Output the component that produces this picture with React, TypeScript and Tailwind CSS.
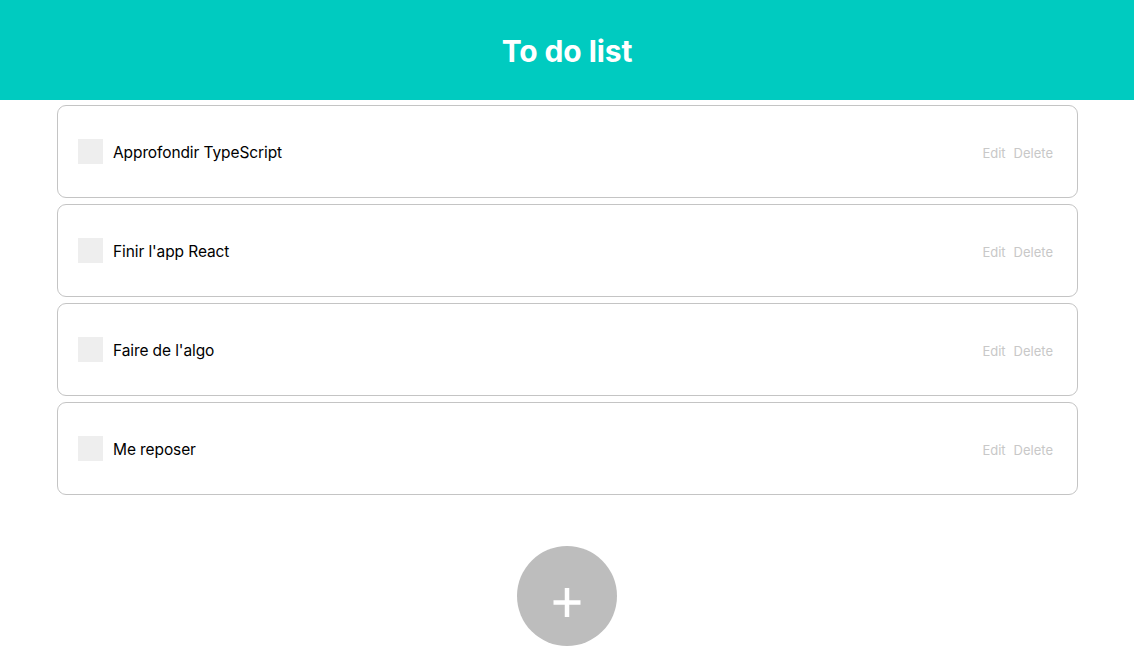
import React from "react";

const todos = ["Approfondir TypeScript", "Finir l'app React", "Faire de l'algo", "Me reposer"];

export default function App() {
  return (
    <div className="min-h-[671px] bg-white" style={{ fontFamily: "Inter, 'Noto Sans', sans-serif" }}>
      <header className="h-[100px] bg-[#00cbc0] flex items-center justify-center">
        <h1 className="text-[30px] font-bold text-white tracking-[-0.1px] mt-[2px]">To do list</h1>
      </header>
      <div className="ml-[57px] mr-[56px] mt-[5px] flex flex-col gap-[6px]">
        {todos.map((t) => (
          <div
            key={t}
            className="h-[93px] border border-[#c4c4c4] rounded-[9px] flex items-center pl-[20px] pr-[24px]"
          >
            <div className="w-[25px] h-[25px] bg-[#eeeeee]" />
            <span className="ml-[10px] text-[15.5px] tracking-[-0.1px] text-black mt-[2px]">{t}</span>
            <div className="ml-auto flex gap-[8px] text-[13px] text-[#c8c8c8] mt-[4px]">
              <span>Edit</span>
              <span>Delete</span>
            </div>
          </div>
        ))}
      </div>
      <div className="flex justify-center mt-[51px]">
        <button className="w-[100px] h-[100px] rounded-full bg-[#bdbdbd] flex items-center justify-center">
          <svg width="28" height="30" viewBox="0 0 28 30" className="mt-[12px]">
            <path d="M14 1V30M0.5 15.5H27.5" stroke="white" strokeWidth="4.5" />
          </svg>
        </button>
      </div>
    </div>
  );
}
